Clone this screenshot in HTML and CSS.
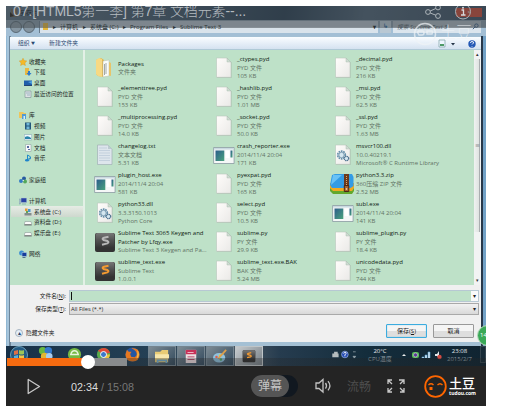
FILE: index.html
```html
<!DOCTYPE html>
<html lang="zh-CN">
<head>
<meta charset="utf-8">
<title>07.[HTML5第一季] 第7章 文档元素</title>
<link rel="stylesheet" href="styles.css">
</head>
<body>
<svg width="0" height="0" class="defs">
  <defs>
    <linearGradient id="paper" x2="1" y2="1"><stop stop-color="#fffdfb"/><stop offset="1" stop-color="#eae9e7"/></linearGradient>
    <linearGradient id="dark" x2="0" y2="1"><stop stop-color="#777"/><stop offset=".5" stop-color="#505050"/><stop offset="1" stop-color="#333"/></linearGradient>
    <linearGradient id="teal" x2="1" y2="1"><stop stop-color="#2c5d8c"/><stop offset="1" stop-color="#4aa37c"/></linearGradient>
    <symbol id="file" viewBox="0 0 22 22"><path d="M4 1.5h10.5l4 4v15.500H4z" fill="#9db5a4" opacity=".7"/><path d="M3.500 1h10.500l4 4v15.300H3.500z" fill="url(#paper)" stroke="#b9c6bc" stroke-width=".6"/><path d="M14 1v4h4z" fill="#cfdcd3" stroke="#a5b5aa" stroke-width=".4"/></symbol>
    <symbol id="txt" viewBox="0 0 22 22"><path d="M3.500 1h10.500l4 4v15.500H3.500z" fill="#dde5ec" stroke="#a1b0b5" stroke-width=".7"/><path d="M5 4h8M5 6.500h11M5 9h11M5 11.500h11M5 14h11M5 16.500h11" stroke="#b7c7d7" stroke-width=".7"/><path d="M14 1v4h4z" fill="#bccbd0"/></symbol>
    <symbol id="dll" viewBox="0 0 22 22"><use href="#file"/><circle cx="9.500" cy="11" r="3.800" fill="none" stroke="#6690ac" stroke-width="1.700" stroke-dasharray="1.700 .7"/><circle cx="9.500" cy="11" r="2.700" fill="#d5e7f0" stroke="#5d839d" stroke-width=".7"/><circle cx="14.500" cy="14.500" r="2.200" fill="#d5e7f0" stroke="#527591" stroke-width="1.300" stroke-dasharray="1.200 .4"/></symbol>
    <symbol id="exe" viewBox="0 0 22 22"><path d="M.6 3.500h20.500v16H.6z" fill="#f5f7f7" stroke="#8a9ba1" stroke-width=".8"/><path d="M1 4h19.700v1.500H1z" fill="#c9d9e1"/><path d="M2.500 6.500h8.800v10.500H2.500z" fill="url(#teal)"/><path d="M12.500 6.500h4v7.500h-4z" fill="#fff"/><path d="M17.500 6.500h2v7h-2z" fill="url(#teal)"/></symbol>
    <symbol id="folder" viewBox="0 0 22 22"><path d="M2 3l5-2 3 2v17l-6-1-2-2z" fill="#e2b74f"/><path d="M2 3l3-2 3 1v18l-4-1-2-2z" fill="#f7d983"/><path d="M9 4l6-1v16l-6 1z" fill="#fafcf9" stroke="#b8bda9" stroke-width=".5"/><path d="M10.500 7v11M12 6v11" stroke="#7e8582" stroke-width=".7"/><path d="M15 5l2 1v13l-2-.5z" fill="#e7c46a"/></symbol>
    <symbol id="zip" viewBox="0 0 24 22"><path d="M0 14h24v4l-2 3H3l-3-3z" fill="#64a82c"/><path d="M0 10h24v5l-2 3H3l-3-3z" fill="#efaa22"/><path d="M2 2l3-1h17l1.500 3v9l-3 2H2l-2-3z" fill="#339ce4"/><path d="M3 2h9L1 12z" fill="#69c2f6"/><path d="M14 1h5v15h-5z" fill="#6b391c"/><path d="M16.500 3v9" stroke="#e0a867" stroke-width="1" stroke-dasharray="1 1"/><path d="M14.300 12.500h4.500v6h-4.500z" fill="#a3602d" stroke="#4b2614"/><circle cx="16.500" cy="16" r=".9" fill="#e7c9a2"/></symbol>
    <symbol id="subl" viewBox="0 0 22 22"><rect x="1" y="2" width="20" height="19" rx="2" fill="#333"/><rect x="1.500" y="2" width="19" height="15" rx="2" fill="url(#dark)"/><path d="M14.500 5.700l-4.500 1q-2.500 1-.5 2.300l4 1q2 1.200-.2 2.400L8 13.700" fill="none" stroke="currentColor" stroke-width="2"/></symbol>
    <symbol id="ff" viewBox="0 0 16 16"><circle cx="8" cy="8" r="7.500" fill="#2456a3"/><path d="M7 1.200Q15 1 15.500 8q0 7-7.500 7.500Q.5 15 .5 8L2 3l2 2 3 0-1.500 2.500 1 3 4 .5 2-2.500Q13 4 7 1.200z" fill="#e67820"/><path d="M13 3q4 6-1 10 2-5 1-10z" fill="#f8c04b"/></symbol>
  </defs>
</svg>
<main class="player">
  <div class="screen">
    <header class="caption"><svg class="notebook" viewBox="0 0 8 10"><path d="M1 1h6v8H1z" fill="#665c4b"/><path d="M0 4l4 4-4 1z" fill="#231d18"/></svg><span>另存为</span><i class="winclose">×</i></header>
    <div class="address">
      <svg class="nav" viewBox="0 0 25 12"><g fill="#8494a0" stroke="#4c5a65" stroke-width=".8"><circle cx="6" cy="6" r="5.500"/><circle cx="19" cy="6" r="5.500"/></g></svg>
      <div class="path"><i class="foldericon"></i><span class="a1">▸</span><span class="a2">计算机</span><span class="a1">▸</span><span class="a3">系统盘 (C:)</span><span class="a1">▸</span><span class="a4">Program Files</span><span class="a1">▸</span><span>Sublime Text 3</span><b>▾</b></div>
      <div class="refresh">↳</div>
      <div class="search"><span>搜索 Sublime Text 3</span><svg viewBox="0 0 8 8"><circle cx="5" cy="3" r="2" fill="none" stroke="#2b517c"/><path d="M3.500 4.500L1 7" stroke="#2b517c"/></svg></div>
    </div>
    <div class="toolbar"><span>组织 <em>▼</em></span><span class="new">新建文件夹</span>
      <svg class="views" viewBox="0 0 40 11"><path d="M1 2h6v7H1z" fill="#eef6ff" stroke="#7ba1a4" stroke-width=".7"/><path d="M2 6h4v2H2z" fill="#4e9a67"/><path d="M13 5h4l-2 2.500z" fill="#263548"/><circle cx="34" cy="6" r="3.700" fill="#2358b5"/><path d="M32.500 5q0-1.500 1.500-1.500 2 0 1.500 1.500l-1.500 1.500M34 8v.7" fill="none" stroke="#fff" stroke-width=".9"/></svg>
    </div>
    <div class="content">
      <nav class="side">
        <div class="head"><svg viewBox="0 0 8 8"><path d="M4 .2l1.200 2.400 2.600.4-1.900 1.900.5 2.700L4 6.300 1.600 7.600l.5-2.700L.2 3l2.600-.4z" fill="#f4ba27" stroke="#d3932c" stroke-width=".4"/></svg>收藏夹</div>
        <div><svg viewBox="0 0 8 8"><path d="M1 0h4v7H1z" fill="#e8b944"/><path d="M4 3h2v2h1.500L5 8 2.500 5H4z" fill="#2d7acb"/></svg>下载</div>
        <div><svg viewBox="0 0 8 8"><path d="M0 1.500h8V7H0z" fill="#205eaa"/><path d="M4 3l4-1v3z" fill="#4fa1df"/><path d="M0 6.200h8v.8H0z" fill="#263d65"/></svg>桌面</div>
        <div><svg viewBox="0 0 8 8"><path d="M1 1h6v6.500H1z" fill="#dce1e4" stroke="#7c9094" stroke-width=".6"/><path d="M2 3h4M3 5h3" stroke="#7797ab" stroke-width=".6"/></svg>最近访问的位置</div>
        <div class="head gap1"><svg viewBox="0 0 8 8"><path d="M0 1h4l1 1h2v5H0z" fill="#edc65d"/><path d="M3 3h4v5H3z" fill="#519bd4"/><path d="M4.500 5H6v3H4.500z" fill="#d9edf6"/></svg>库</div>
        <div><svg viewBox="0 0 8 8"><path d="M1 .5h6v7H1z" fill="#23567b"/><path d="M2.500 1h3v2.500h-3zM2.500 4.500h3V7h-3z" fill="#70b7d7"/></svg>视频</div>
        <div><svg viewBox="0 0 8 8"><path d="M.3 1.500h7.400V7H.3z" fill="#eff8fb" stroke="#789eaf" stroke-width=".5"/><path d="M1 4q3-2 6 1v1H1z" fill="#2985aa"/></svg>图片</div>
        <div><svg viewBox="0 0 8 8"><path d="M1.500.5H7v7H1.500z" fill="#f8f8fa" stroke="#839696" stroke-width=".5"/><path d="M3 2h2v2H3zM4 5h2v1H4z" fill="#596da1"/></svg>文档</div>
        <div><svg viewBox="0 0 8 8"><path d="M3.500 6V1l3 1.800v2L5 4v2.500" stroke="#218cc8" fill="none"/><ellipse cx="3" cy="6.300" rx="2" ry="1.300" fill="#1e83cb"/></svg>音乐</div>
        <div class="head gap2"><svg viewBox="0 0 8 8"><circle cx="2" cy="5" r="2" fill="#337bc4"/><circle cx="5" cy="2.500" r="2" fill="#2759a1"/><circle cx="6" cy="5.500" r="2" fill="#54a75c"/><circle cx="4.300" cy="4.500" r=".8" fill="#d5edda"/></svg>家庭组</div>
        <div class="head gap3"><svg viewBox="0 0 8 8"><path d="M2 1h5.700v4.500H2z" fill="#2942a3" stroke="#b2c8d5" stroke-width=".5"/><path d="M.3 2h1v5h-1zM3 7h4" stroke="#7190a7" stroke-width=".6" fill="#dce9eb"/></svg>计算机</div>
        <div class="selected"><svg viewBox="0 0 8 8"><path d="M.5 5h7v2.500h-7z" fill="#828c8c"/><path d="M1 .5h2.500V3H1z" fill="#e59a35"/><path d="M4 1h2.500v3H4z" fill="#4997cf"/><path d="M2 3h2v2H2z" fill="#61a256"/></svg>系统盘 (C:)</div>
        <div><svg viewBox="0 0 8 8"><path d="M1 3.500h6L8 7H0z" fill="#fafafa" stroke="#8b9c97" stroke-width=".6"/><path d="M.5 6.800h7" stroke="#666"/></svg>资料盘 (D:)</div>
        <div><svg viewBox="0 0 8 8"><path d="M1 3.500h6L8 7H0z" fill="#fafafa" stroke="#8b9c97" stroke-width=".6"/><path d="M.5 6.800h7" stroke="#666"/></svg>娱乐盘 (E:)</div>
        <div class="head gap3"><svg viewBox="0 0 8 8"><circle cx="2.600" cy="3" r="2.500" fill="#3c8fd2"/><path d="M3 2.500h4.700v4H3z" fill="#173c9c" stroke="#c1dde3" stroke-width=".5"/><path d="M3.500 7.500h3" stroke="#54728e"/></svg>网络</div>
      </nav>
      <section class="files">
        <article><svg><use href="#folder"/></svg><p><b>Packages</b>文件夹</p></article>
        <article><svg><use href="#file"/></svg><p><b>_ctypes.pyd</b>PYD 文件<br>105 KB</p></article>
        <article><svg><use href="#file"/></svg><p><b>_decimal.pyd</b>PYD 文件<br>216 KB</p></article>
        <article><svg><use href="#file"/></svg><p><b>_elementtree.pyd</b>PYD 文件<br>153 KB</p></article>
        <article><svg><use href="#file"/></svg><p><b>_hashlib.pyd</b>PYD 文件<br>1.01 MB</p></article>
        <article><svg><use href="#file"/></svg><p><b>_msi.pyd</b>PYD 文件<br>62.5 KB</p></article>
        <article><svg><use href="#file"/></svg><p><b>_multiprocessing.pyd</b>PYD 文件<br>14.0 KB</p></article>
        <article><svg><use href="#file"/></svg><p><b>_socket.pyd</b>PYD 文件<br>50.0 KB</p></article>
        <article><svg><use href="#file"/></svg><p><b>_ssl.pyd</b>PYD 文件<br>1.63 MB</p></article>
        <article><svg><use href="#txt"/></svg><p><b>changelog.txt</b>文本文档<br>5.31 KB</p></article>
        <article><svg><use href="#exe"/></svg><p><b>crash_reporter.exe</b>2014/11/4 20:04<br>171 KB</p></article>
        <article><svg><use href="#dll"/></svg><p><b>msvcr100.dll</b>10.0.40219.1<br>Microsoft® C Runtime Library</p></article>
        <article><svg><use href="#exe"/></svg><p><b>plugin_host.exe</b>2014/11/4 20:04<br>581 KB</p></article>
        <article><svg><use href="#file"/></svg><p><b>pyexpat.pyd</b>PYD 文件<br>165 KB</p></article>
        <article><svg class="wide"><use href="#zip"/></svg><p><b>python3.3.zip</b>360压缩 ZIP 文件<br>2.52 MB</p></article>
        <article><svg><use href="#dll"/></svg><p><b>python33.dll</b>3.3.3150.1013<br>Python Core</p></article>
        <article><svg><use href="#file"/></svg><p><b>select.pyd</b>PYD 文件<br>10.5 KB</p></article>
        <article><svg><use href="#exe"/></svg><p><b>subl.exe</b>2014/11/4 20:04<br>141 KB</p></article>
        <article><svg class="grey"><use href="#subl"/></svg><p><b>Sublime Text 3065 Keygen and</b><b>Patcher by Lfqy.exe</b>Sublime Text 3 Keygen and Pa...</p></article>
        <article><svg><use href="#file"/></svg><p><b>sublime.py</b>PY 文件<br>29.9 KB</p></article>
        <article><svg><use href="#file"/></svg><p><b>sublime_plugin.py</b>PY 文件<br>18.4 KB</p></article>
        <article><svg class="orange"><use href="#subl"/></svg><p><b>sublime_text.exe</b>Sublime Text<br>1.0.0.1</p></article>
        <article><svg><use href="#file"/></svg><p><b>sublime_text.exe.BAK</b>BAK 文件<br>5.24 MB</p></article>
        <article><svg><use href="#file"/></svg><p><b>unicodedata.pyd</b>PYD 文件<br>744 KB</p></article>
      </section>
      <div class="scroll"><i>▴</i><span>≡</span><i>▾</i></div>
    </div>
    <div class="form">
      <div class="row"><label>文件名(<u>N</u>):</label><div class="field green"><span class="caret"></span><i>▾</i></div></div>
      <div class="row"><label>保存类型(<u>T</u>):</label><div class="field type"><span>All Files (*.*)</span><i>▾</i></div></div>
      <div class="actions"><span class="hide"><i>▴</i>隐藏文件夹</span><button class="save">保存(<u>S</u>)</button><button>取消</button></div>
    </div>
    <div class="taskbar">
      <svg class="start" viewBox="0 0 18 18"><circle cx="9" cy="9" r="8.500" fill="#245a83" stroke="#6c9eb6"/><path d="M4 5l4-1v4L4 9z" fill="#dc7047"/><path d="M9 4q3 1 5 0v4q-3 1-5 0z" fill="#9dc558"/><path d="M4 10l4-1v4H4z" fill="#58afe0"/><path d="M9 9q3 1 5 0v4H9z" fill="#f1c64b"/></svg>
      <svg class="t1" viewBox="0 0 16 16"><circle cx="5" cy="4" r="4" fill="#67b73f"/><circle cx="11" cy="4" r="4" fill="#3479cc"/><circle cx="7" cy="10" r="4" fill="#e3b533"/><circle cx="12" cy="10" r="3.500" fill="#a7cdf0"/></svg>
      <svg class="t2" viewBox="0 0 16 16"><circle cx="8" cy="8" r="7" fill="#74b844"/><path d="M4 8q1-4 4-4t4 4z" fill="none" stroke="#e9f4dd" stroke-width="1.500"/></svg>
      <svg class="t3" viewBox="0 0 16 16"><circle cx="8" cy="8" r="7" fill="#5aab4d"/><path d="M8 8L2 4Q5 1 8 1q5 0 7 5z" fill="#df4938"/><path d="M8 8h7q-1 7-8 7z" fill="#edc43b"/><circle cx="8" cy="8" r="3.200" fill="#3b78cb" stroke="#fff"/></svg>
      <svg class="t4"><use href="#ff"/></svg>
      <div class="task"><svg viewBox="0 0 18 16"><path d="M1 3h6l2-2h7v14H1z" fill="#e8cb75"/><path d="M1 6h16v5H1z" fill="#f7e7ac"/><path d="M3 12h12v4h-2v-2H5v2H3z" fill="#74afcf"/></svg></div>
      <div class="task"><svg viewBox="0 0 18 16"><path d="M3 1h12v15H3z" fill="#efdee2"/><path d="M3 1h12v5H3z" fill="#c83058"/><path d="M5 9h8M5 12h8" stroke="#b0375b"/><path d="M5 4h7" stroke="#f3c6d0"/></svg></div>
      <div class="task"><svg viewBox="0 0 18 16"><ellipse cx="8" cy="10" rx="7" ry="5.500" fill="#8fc2de"/><circle cx="5" cy="9" r="1.400" fill="#d65f51"/><circle cx="9" cy="7.500" r="1.400" fill="#e5c64b"/><circle cx="10" cy="12" r="1.400" fill="#52a568"/><path d="M7 11l9-10" stroke="#dda04a" stroke-width="2"/></svg></div>
      <div class="task active"><svg class="orange"><use href="#subl"/></svg></div>
      <div class="tray"><svg viewBox="0 0 28 10"><path d="M1 4h7v4H1zM3 2h4v2H3z" fill="#b5bcbe"/><circle cx="15" cy="5" r="3.700" fill="#244bb2" stroke="#a9bff0" stroke-width=".7"/><path d="M13.700 4q0-1.500 1.300-1.500 2 0 1.200 1.500l-1.200 1.500V7" stroke="#fff" fill="none"/><path d="M24 2h3M24 7h3l-1.500 2z" stroke="#9aa8b0" fill="#9aa8b0" stroke-width=".8"/></svg></div>
      <div class="temp">20°C<br><span>CPU温度</span></div>
      <svg class="status" viewBox="0 0 42 10"><path d="M1 6l2-2 2 2z" fill="#eee"/><rect x="11" y="2" width="7" height="6" rx="2" fill="#5abf58"/><circle cx="14.500" cy="5" r="2" fill="#5b3793" stroke="#d5d0e9" stroke-width=".5"/><path d="M21 8V7h2v1M24 8V5h2v3M27 8V2h2v6" fill="#dceaf4" stroke="#58a0cf" stroke-width=".6"/><path d="M34 4h2l2-3v7l-2-2h-2z" fill="#e3e8eb"/><circle cx="38.500" cy="7" r="2.200" fill="#d14a42"/></svg>
      <div class="clock">23:08<br><span>2015/2/7</span></div>
      <i class="peek"></i>
    </div>
  </div>
  <div class="controls">
    <svg class="play" viewBox="0 0 14 17"><path d="M1.200 1.500v14L12.500 8.500z" fill="none" stroke="#c9c9c9" stroke-width="1.300" stroke-linejoin="round"/></svg>
    <div class="time">02:34<span> / 15:08</span></div>
    <div class="danmu"><span>弹幕</span></div>
    <svg class="volume" viewBox="0 0 18 16"><g fill="none" stroke="#c2c2c2" stroke-width="1.300"><path d="M1 5v5.500h3l4 3.500V1.500L4 5z"/><path d="M10.500 5q2 2.800 0 5.600M13 3.200q3.800 4.600 0 9.200"/></g></svg>
    <span class="quality">流畅</span>
    <svg class="full" viewBox="0 0 18 15"><g fill="none" stroke="#c7c7c7" stroke-width="1.300"><path d="M1 5V1h4M1 1l4 4M12 1h5v4M17 1l-4 4M1 9v4h4M1 13l4-4M17 9v4h-4M17 13l-4-4"/></g></svg>
    <svg class="logo" viewBox="0 0 23 23"><circle cx="11.500" cy="11.500" r="10.300" fill="none" stroke="#ff6600" stroke-width="1.800"/><path d="M4.500 10q2.500-2.500 5 0M13.500 10q2.500-2.500 5 0" fill="none" stroke="#ff6600" stroke-width="1.400"/><path d="M5.500 12h3v3h-3z" fill="#ff6600"/></svg>
    <div class="brand"><b>土豆</b><span>tudou.com</span></div>
  </div>
  <div class="shade"><h1>07.[HTML5第一季] 第7章 文档元素--...</h1>
    <svg viewBox="0 0 50 14"><g fill="none" stroke="#adb4b9" stroke-width="1"><circle cx="3" cy="6" r="2.400"/><circle cx="13" cy="1.500" r="2.400"/><circle cx="13" cy="10" r="2.400"/><path d="M5.200 5l5.600-2.500M5.200 7l5.600 2.200"/><circle cx="38" cy="5.500" r="7.500"/></g><path d="M36.500 4h2v5M36 9h4.500" stroke="#d6d9dc" fill="none" stroke-width="1.300"/><circle cx="38" cy="1.800" r="1" fill="#d6d9dc"/></svg>
  </div>
  <div class="watermark"><svg viewBox="0 0 24 24"><circle cx="12" cy="12" r="10.500"/><path d="M5 9h5q1 0 1 2t-2 2H6q-2-2-1-4M14 9h5q1 0 0 3h-5z"/></svg><span>土豆</span></div>
  <div class="progress"><i></i><b></b></div>
  <div class="bubble">14</div>
</main>
</body>
</html>
```
FILE: styles.css
```css
* { box-sizing: border-box; }
body { margin: 0; padding: 6px; background: #fff; width: 509px; height: 420px; overflow: hidden; font: 6px/8px "Open Sans", "Noto Sans CJK SC", sans-serif; }
svg { display: block; flex: none; }
.defs { position: absolute; }
i, em { font-style: normal; }
.player { position: relative; width: 480px; height: 400px; overflow: hidden; background: #242424; }
.screen { height: 360px; background: linear-gradient(90deg, #79a9c9, #a7c5dc 1px, #a5c4da 3px, #35475a 4px, #a4c0d4 5px, #a4c0d4 475px, #283749 475px, #283749 477px, #73a2c7 477px); display: flex; flex-direction: column; }
.caption { height: 14px; display: flex; align-items: center; padding: 0 4px; background: linear-gradient(100deg, #566b7c, #34495d 40%, #1f3549 58%, #465b6e 75%, #33475b); color: #101820; }
.notebook { width: 8px; height: 10px; margin-right: 2px; }
.winclose { margin-left: auto; width: 26px; height: 9px; line-height: 8px; text-align: center; background: #c7412c; color: #ddd; }
.address { height: 16px; padding: 1px 5px 3px 4px; display: flex; gap: 2px; align-items: center; background: linear-gradient(#8296a5 7px, #a3bfd5 8px); color: #111a22; white-space: nowrap; }
.nav { width: 25px; height: 12px; margin-right: 2px; }
.path { width: 339px; height: 12px; background: linear-gradient(#b2bfc9 6px, #d9e3eb 7px); display: flex; align-items: center; border-left: 1px solid #687c8c; }
.foldericon { width: 5px; height: 7px; margin-left: 3px; background: #e4b63a; }
.a1 { width: 5px; margin-left: 5px; margin-right: 2px; }
.a2 { width: 18px; }
.a3 { width: 28px; }
.a4 { width: 38px; }
.path b { margin-left: auto; margin-right: 2px; }
.refresh { width: 11px; height: 12px; text-align: center; line-height: 11px; color: #2b6597; background: #b9c8d3; font-weight: bold; }
.search { flex: 1; height: 12px; display: flex; align-items: center; padding: 0 2px 0 4px; background: linear-gradient(#a9b5bf 6px, #dbe5ed 7px); font-style: italic; font-size: 5.800px; color: #46525c; }
.search svg { width: 7px; height: 7px; margin-left: auto; }
.toolbar { margin: 1px 5px 0 4px; height: 14px; background: linear-gradient(#fafdff, #e7eff8 50%, #d5e2f0); display: flex; align-items: center; padding: 1px 0 0 8px; color: #2b4970; border-bottom: 1px solid #afc9d6; font-size: 5.800px; }
.toolbar em { font-size: 4px; }
.new { margin-left: 14px; }
.views { width: 40px; height: 11px; margin-left: auto; margin-right: 3px; }
.content { height: 235px; margin: 0 5px 0 4px; display: flex; background: #bee1c8; }
.side { width: 75px; padding-top: 6px; border-right: 2px solid #e3f0e6; color: #1b271f; font-size: 5.700px; }
.side div { height: 10.7px; display: flex; align-items: center; gap: 2px; padding-left: 14px; white-space: nowrap; }
.side svg { width: 8px; height: 8px; }
.side .head { padding-left: 9px; }
.side .gap1 { margin-top: 11px; }
.side .gap2 { margin-top: 11px; }
.side .gap3 { margin-top: 10.5px; }
.side .selected { background: linear-gradient(#e6ece5, #ced8ce); margin-left: 1px; padding-left: 13px; }
.files { width: 389px; padding-top: 3px; display: grid; grid-template-columns: 119px 119px 151px; grid-template-rows: repeat(8, 29px); }
.files article { display: flex; align-items: center; padding-left: 9px; white-space: nowrap; }
.files svg { width: 22px; height: 22px; margin-right: 2px; }
.files .wide { width: 24px; margin-left: -2px; }
.files article p { margin: 0; color: #5f7264; font-size: 6px; line-height: 8.300px; }
.files b { display: block; font-weight: 500; color: #0e1a12; }
.grey { color: #b7b7b7; }
.orange { color: #f39a31; }
.scroll { width: 7px; background: linear-gradient(90deg, #f0f2f1, #dfe3e1 5px, #aaaeb0 5px, #aaaeb0 6px, #f2f3f3 6px) 0 9px / 7px 173px no-repeat #f2f3f3; display: grid; grid-template-rows: 91px 1fr 9px; justify-items: center; color: #333; font-size: 5px; }
.form { height: 58px; background: #f0f0f0; margin: 0 5px 0 4px; padding-top: 5px; }
.row { display: flex; height: 12px; margin-bottom: 1px; color: #252525; }
.row label { width: 58px; text-align: right; line-height: 12px; margin-right: 1px; padding-right: 2px; font-size: 5.700px; }
.field { width: 410px; height: 12px; display: flex; justify-content: space-between; align-items: center; border: 1px solid #b7c8d3; padding: 0 2px 0 1px; font-size: 5.700px; }
.green { background: linear-gradient(90deg, #bee1c8 401px, #fafafa 401px); }
.caret { border-left: 1px solid #111; height: 8px; }
.type { background: linear-gradient(#f2f2f2, #d9d9d9); border-color: #a9a9a9; }
.actions { display: flex; align-items: center; padding: 8px 5px 0 5px; gap: 6px; }
.hide { display: flex; align-items: center; gap: 3px; margin-right: auto; color: #222; font-size: 5.700px; padding-top: 3px; }
.hide i { width: 8px; height: 8px; line-height: 7px; text-align: center; border: 1px solid #a6b4c1; border-radius: 50%; color: #284469; background: #e5eef7; }
button { width: 41px; height: 14px; padding: 0; border: 1px solid #999; border-radius: 1px; background: linear-gradient(#f5f5f5 50%, #dedede 51%); font: inherit; color: #1c1c1c; }
.save { border-color: #3cacdf; box-shadow: inset 0 0 1px #3cacdf; }
.actions button { position: relative; left: -2px; }
.taskbar { margin-top: 4px; height: 20px; flex: none; overflow: hidden; background: linear-gradient(90deg, #173047, #244055 30%, #4b5964 49%, #263c4f 57%, #142d3c 75%, #102431); display: flex; color: #e2e8eb; padding-left: 4px; }
.taskbar > svg { width: 15px; height: 15px; margin-top: 1px; }
.taskbar > .start { width: 18px; height: 18px; margin-top: 0; }
.taskbar > .t1 { margin-left: 10px; }
.taskbar > .t2 { margin-left: 14px; }
.taskbar > .t3 { margin-left: 14px; }
.taskbar > .t4 { margin: 1px 8px 0 14px; }
.task { width: 28px; height: 20px; margin-right: 1px; padding: 2px 5px; border: 1px solid #758590; background: linear-gradient(135deg, #7d8b94, #344b5e); }
.task svg { width: 16px; height: 14px; }
.active { background: linear-gradient(135deg, #c5cacd, #778087); border-color: #bfc5c8; }
.tray { width: 28px; margin-left: 66px; padding-top: 4px; }
.tray svg { width: 28px; height: 9px; }
.temp { width: 26px; margin-left: 9px; text-align: center; white-space: nowrap; padding-top: 1px; }
.temp span, .clock span { color: #8e9ba2; }
.taskbar > .status { width: 42px; height: 10px; margin: 4px 0 0 8px; }
.clock { width: 27px; margin-left: 3px; text-align: center; padding-top: 1px; }
.peek { width: 6px; height: 17px; margin-left: auto; border: 1px solid #35454f; background: #172b37; }
.controls { height: 40px; background: #242424; display: flex; align-items: center; padding-left: 21px; }
.play { width: 14px; height: 17px; }
.time { margin-left: 30px; width: 180px; font: 10.800px/14px "Liberation Sans", sans-serif; color: #ddd; padding-top: 1px; }
.time span { color: #777; }
.danmu { width: 47px; height: 22px; border-radius: 11px; background: #111820; color: #c5c5c5; font-size: 12px; line-height: 22px; }
.danmu span { display: block; width: 38px; height: 22px; border-radius: 11px; background: #555; text-align: center; }
.volume { width: 18px; height: 16px; margin-left: 17px; }
.quality { font-size: 12px; line-height: 16px; color: #4e4e4e; margin-left: 14px; padding-top: 2px; }
.full { width: 18px; height: 15px; margin-left: 16px; }
.logo { width: 23px; height: 23px; margin-left: 19px; }
.brand { margin-left: 2px; width: 28px; color: #fff; line-height: 13px; }
.brand b { display: block; font-size: 13px; font-weight: 500; line-height: 14px; }
.brand span { display: block; font: bold 5px/7px "Open Sans", sans-serif; }
.shade { position: absolute; inset: 0 0 auto 0; height: 22px; background: rgba(67, 73, 78, .48); }
.shade h1 { position: absolute; left: 7px; top: -3px; margin: 0; font: 14px/17px "Liberation Sans", "Noto Sans CJK SC", sans-serif; color: #b5bbc0; white-space: nowrap; letter-spacing: -.1px; font-weight: 300; }
.shade svg { position: absolute; left: 419px; top: 0; width: 50px; height: 14px; overflow: visible; }
.watermark { position: absolute; left: 407px; top: 16px; display: flex; align-items: center; color: rgba(240,244,247,.7); font: 300 16px/22px "Noto Sans CJK SC", sans-serif; white-space: nowrap; }
.watermark svg { width: 24px; height: 24px; fill: none; stroke: rgba(240,244,247,.7); stroke-width: 1.500; margin-right: 3px; }
.watermark span { margin-top: -6px; }
.progress { position: absolute; left: 1px; top: 352px; width: 479px; height: 8px; background: linear-gradient(90deg, #f56b10 82px, #888b8d 82px, #888b8d 120px, rgba(36,36,36,.3) 120px); }
.progress b { position: absolute; left: 74px; top: -3px; width: 14px; height: 14px; border-radius: 50%; background: #fff; }
.bubble { position: absolute; left: 471px; top: 319px; width: 21px; height: 21px; border: 1px solid #b7d8bd; border-radius: 50%; background: #3aa957; color: #fff; font-size: 6px; line-height: 19px; padding-left: 2px; }
```
